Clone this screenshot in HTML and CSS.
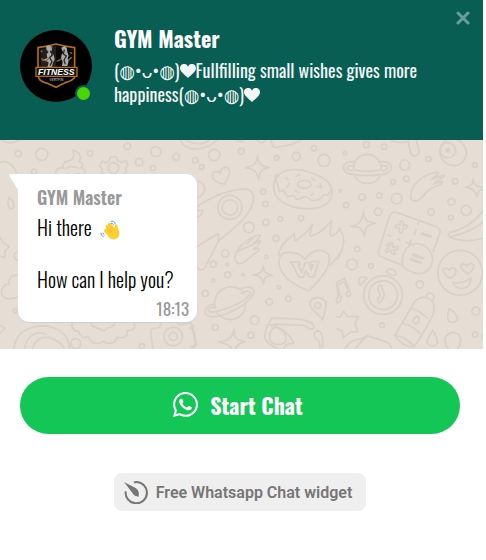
FILE: index.html
```html
<!DOCTYPE html>
<html lang="en">
<head>
<meta charset="utf-8">
<meta name="viewport" content="width=device-width, initial-scale=1">
<title>GYM Master</title>
<link rel="stylesheet" href="styles.css">
</head>
<body>
<main class="widget">
  <header class="header">
    <div class="avatar">
      <svg class="avatar-logo" viewBox="0 0 216 216" aria-hidden="true">
        <circle cx="108" cy="108" r="108" fill="#000"/>
        <path d="M54 112V53Q78 50 108 42Q138 50 164 53V112" fill="#090909" stroke="#b56d13" stroke-width="5"/>
        <path d="M108 48V112H62V57Q82 55 108 48Z" fill="#202020"/>
        <path d="M78 50l8-5 9 5 1 10-5 6 10 9 3 13-5 10-4 15H82l4-15-9-7-12 2 9-6 8-2-2-13 6-6-6-6ZM124 53l9-5 7 5 2 12 4 12-3 8 3 9-4 14h-16l2-13-5-10 2-12 5-5-4-8Z" fill="#aaa"/>
        <path d="M91 62l6 13-8 8 7 12-6 12M133 59l-3 13 9 6-7 12 4 13" fill="none" stroke="#292929" stroke-width="4"/>
        <path d="M64 86l14 7 10-8M145 91l10-9M110 94l15-7M62 66l5-4M151 67l5 4M92 45l5 8" fill="none" stroke="#a5651f" stroke-width="4"/>
        <path d="M55 141Q59 155 82 160L108 172L138 157Q159 152 164 141" fill="none" stroke="#b56d13" stroke-width="5"/>
        <path d="M48 112H171V139H48Z" fill="#111" stroke="#b56d13" stroke-width="4"/>
        <text class="logo-name" x="109" y="134" text-anchor="middle">FITNESS</text>
        <text class="logo-sub" x="109" y="153" text-anchor="middle">VERTFIN</text>
      </svg>
      <span class="status"></span>
    </div>
    <div class="intro">
      <h1 class="title">GYM Master</h1>
      <p class="tagline">(◍•ᴗ•◍)<svg class="heart" viewBox="0 0 48 42" aria-hidden="true"><path d="M24 42C17 34 0 25 0 12C0-3 20-4 24 8C28-4 48-3 48 12C48 25 31 34 24 42Z"/></svg>Fullfilling small wishes gives more happiness(◍•ᴗ•◍)<svg class="heart" viewBox="0 0 48 42" aria-hidden="true"><path d="M24 42C17 34 0 25 0 12C0-3 20-4 24 8C28-4 48-3 48 12C48 25 31 34 24 42Z"/></svg></p>
    </div>
    <button class="close" type="button" aria-label="Close">
      <svg viewBox="0 0 14 14" aria-hidden="true"><path d="M2 2L12 12M12 2L2 12"/></svg>
    </button>
  </header>

  <section class="chat">
    <svg class="doodles" viewBox="0 0 1449 627" preserveAspectRatio="xMinYMin slice" aria-hidden="true">
      <g transform="translate(0 -15)">
        <circle cx="125" cy="58" r="18"/><circle cx="55" cy="56" r="9"/><circle cx="102" cy="110" r="8"/><circle cx="270" cy="55" r="8"/><circle cx="382" cy="34" r="10"/><circle cx="417" cy="81" r="11"/><circle cx="467" cy="50" r="15"/><circle cx="458" cy="99" r="8"/><circle cx="528" cy="65" r="10"/>
        <path d="M0 12Q28 35 60 13M0 82C18 75 40 88 49 112M170 125C160 103 180 95 190 99C185 82 200 78 207 77C222 74 224 54 217 45C240 50 246 68 237 79C253 84 248 95 242 99C260 102 258 120 249 125"/>
        <path d="M197 100q18-10 39 0M202 117q18 8 35-3"/>
        <path d="M331 66h18l4 12 12 4 10-6 9 13-8 10 3 13-6 5M331 66l-4 13-11 5-10-6-7 14 8 10-3 12 8 4"/><circle cx="340" cy="99" r="16"/>
        <path d="M541 15C556 52 614 50 650 15M559 15C575 30 610 30 628 15"/>
        <path d="M27 188C22 202 23 221 34 221S45 199 27 188ZM0 307L9 322L27 334L15 348V368L0 363M54 352C40 350 38 370 54 377M54 421C31 416 24 437 27 447C7 445-1 474 10 485C17 493 32 493 54 486"/>
        <circle cx="46" cy="527" r="6"/>
        <path d="M0 571L15 579L0 594M41 642C49 570 127 565 164 579C195 591 207 615 208 642M73 642C80 600 111 585 139 598M97 642C105 610 134 599 158 611C179 620 190 629 192 642"/>
        <path d="M218 560C211 577 223 590 236 588C240 604 249 612 263 603C275 628 294 629 310 619C326 630 345 625 351 606C373 613 384 602 381 585C403 589 409 573 399 560M271 560C275 579 290 576 311 587C324 572 342 580 346 560"/>
        <circle cx="227" cy="625" r="15"/><circle cx="425" cy="633" r="8"/>
        <path d="M458 642L452 590Q451 580 462 580L478 577L484 560H528L538 569L566 564Q576 562 578 575L588 625Q588 636 575 638M568 579h7"/><circle cx="519" cy="604" r="28"/><circle cx="519" cy="604" r="12"/>
      </g>
      <g transform="translate(570 -15)">
        <circle cx="15" cy="76" r="8"/><circle cx="34" cy="96" r="7"/><circle cx="72" cy="60" r="17"/><circle cx="153" cy="49" r="9"/><circle cx="259" cy="69" r="7"/><circle cx="318" cy="64" r="12"/><circle cx="371" cy="40" r="8"/><circle cx="401" cy="76" r="18"/>
        <path d="M140 17Q153 24 160 15M201 17Q213 31 226 15M242 15Q247 45 266 36L305 28L333 15"/>
        <path d="M202 61C204 82 207 94 238 97C213 101 209 108 205 133C198 107 195 104 166 98C195 93 199 84 202 61ZM103 147C78 143 63 133 67 117C73 105 83 109 91 115C91 94 112 91 118 107C121 119 111 132 103 147Z"/>
        <path d="M250 155C258 91 327 98 370 116C410 131 430 151 424 180C418 218 365 228 315 217C276 207 248 185 250 155ZM257 133Q264 150 267 170L280 165L291 185L309 181L320 194L345 184L367 198L391 191L399 179L413 181L425 158M258 118Q250 128 257 139"/><ellipse cx="342" cy="148" rx="20" ry="12"/>
        <path d="M287 128l6 6M318 123l10-3M364 130l10 7M380 154l15 5M389 145l5 13M370 175l-8 6M326 172l-12-6M297 145l-9 13"/>
        <circle cx="219" cy="170" r="8"/><circle cx="225" cy="207" r="8"/><circle cx="227" cy="262" r="9"/><circle cx="270" cy="252" r="7"/><circle cx="332" cy="249" r="8"/><circle cx="176" cy="277" r="16"/><circle cx="257" cy="310" r="9"/><circle cx="105" cy="355" r="11"/><circle cx="69" cy="387" r="9"/><circle cx="111" cy="388" r="4"/><circle cx="112" cy="419" r="9"/><circle cx="69" cy="436" r="5"/><circle cx="159" cy="419" r="4"/><circle cx="228" cy="366" r="5"/><circle cx="266" cy="456" r="5"/>
        <path d="M21 215C65 184 120 162 163 162C193 164 194 187 185 214C165 257 124 283 83 320C70 349 55 376 43 400Q31 412 21 396M21 334Q49 316 85 295V317M21 226H38L33 239L21 247M21 138C49 143 54 174 21 189"/><circle cx="119" cy="217" r="36"/><circle cx="119" cy="217" r="23"/>
        <path d="M141 348C155 322 178 308 207 299C217 300 200 315 186 329M171 326L187 309M185 330L208 317C216 318 199 334 189 344L204 339C215 345 189 357 175 370C158 386 142 391 136 377Q131 364 141 348Z"/>
        <path d="M265 361C267 330 290 318 312 295C314 311 310 321 320 314C337 301 351 293 366 269C362 289 352 307 366 302C389 294 409 276 422 257C425 280 412 299 424 303Q436 300 450 281M420 389Q437 373 450 353"/>
        <path d="M355 467C327 455 285 438 270 400C260 371 269 352 294 352C320 353 331 357 344 373C363 344 397 336 415 360C427 396 384 440 355 467Z"/>
        <path d="M299 380H327L330 388L323 390L334 412L345 382L359 382L362 406L369 390L361 388L364 379H386L371 424L357 425L346 407L339 426H326L308 390Z"/>
        <path d="M219 392C220 410 222 415 247 421C222 424 222 427 219 447C213 426 211 422 189 420C213 415 214 411 219 392Z"/>
        <circle cx="45" cy="475" r="9"/><circle cx="237" cy="500" r="10"/><circle cx="294" cy="491" r="8"/><circle cx="193" cy="555" r="13"/><circle cx="75" cy="577" r="9"/><circle cx="182" cy="600" r="9"/>
        <path d="M75 519C65 480 96 453 126 455C144 457 156 465 162 475M165 504C169 534 142 555 116 553Q88 548 79 530M151 461C176 450 198 459 189 477C177 498 151 518 116 533C78 549 43 550 44 529C46 512 61 509 72 507M154 474C173 463 184 468 178 479C161 500 127 515 96 524C70 532 52 533 55 522Q61 515 73 515"/>
        <path d="M132 582C131 609 136 613 166 620C147 622 139 630 135 642M125 642C121 630 112 627 86 620C117 619 129 602 132 582M0 548Q7 590 16 620Q17 633 0 635"/>
        <path d="M224 607C224 582 232 570 245 549L318 551C356 555 374 565 370 580C363 587 352 576 342 571L258 567L245 570L234 567M246 571C270 575 303 600 309 624C294 625 280 630 281 641M224 607C229 624 245 633 262 639M238 597C242 580 255 572 266 580C281 585 289 603 287 617C277 633 248 630 240 616ZM389 642Q390 613 375 609C362 593 385 579 391 592Q400 607 396 642"/>
        <path d="M397 555C385 534 355 521 359 505C363 482 396 482 407 502C407 520 401 539 397 555Z"/><circle cx="382" cy="511" r="9"/>
      </g>
      <g transform="translate(1008 -15)">
        <circle cx="26" cy="54" r="5"/><circle cx="90" cy="29" r="9"/><circle cx="143" cy="35" r="8"/><circle cx="205" cy="90" r="15"/><circle cx="276" cy="72" r="8"/><circle cx="210" cy="131" r="8"/><circle cx="170" cy="141" r="7"/><circle cx="77" cy="186" r="10"/><circle cx="129" cy="181" r="8"/><circle cx="29" cy="210" r="8"/><circle cx="181" cy="191" r="16"/><circle cx="125" cy="230" r="11"/><circle cx="12" cy="167" r="4"/><circle cx="284" cy="231" r="10"/><circle cx="345" cy="200" r="10"/><circle cx="343" cy="247" r="7"/><circle cx="389" cy="226" r="15"/><circle cx="415" cy="90" r="7"/><circle cx="356" cy="139" r="8"/><circle cx="62" cy="342" r="8"/><circle cx="47" cy="388" r="16"/><circle cx="104" cy="392" r="7"/><circle cx="250" cy="448" r="11"/><circle cx="137" cy="570" r="7"/><circle cx="418" cy="528" r="12"/><circle cx="416" cy="598" r="8"/>
        <path d="M52 94C57 46 126 46 134 94V104C112 111 75 111 52 104ZM52 80C12 77 12 113 46 118Q92 125 141 118C176 110 171 79 134 80M50 92C27 91 28 105 48 108M136 92C159 91 158 104 139 108M54 120C65 153 120 154 132 120"/>
        <path d="M163 15Q180 27 216 20L222 54Q230 68 244 59Q251 55 246 40L240 15"/>
        <path d="M310 52C312 89 364 110 386 70C397 47 381 19 361 15M310 52Q309 30 329 15"/><circle cx="334" cy="46" r="23"/><circle cx="334" cy="46" r="5" class="dot"/>
        <path d="M223 179C225 144 264 117 304 111C315 114 291 126 284 134L321 119C333 121 304 133 291 147L316 139C325 144 298 155 283 160C266 171 258 193 241 197C226 200 220 191 223 179Z"/>
        <path d="M410 132C411 149 417 154 441 157M441 163C425 164 425 169 421 185C414 166 410 161 388 157C406 153 410 147 410 132M81 229C84 254 88 260 118 264C91 269 88 276 84 303C76 280 74 274 44 274C72 266 77 259 81 229Z"/>
        <path d="M197 390L134 365Q123 360 127 346L158 247Q163 229 180 232L298 274Q315 281 309 296L290 350M197 390C196 349 213 325 244 326C276 329 293 360 287 383C278 417 246 423 218 407Q201 398 197 390ZM250 255l-6 12M239 283l-5 15M190 315l-6-3M163 303l-8-3M224 315l-7 17M209 323l23 6"/>
        <path d="M193 257Q204 256 200 271L210 269Q219 278 201 281L196 293Q184 296 190 280L177 278Q175 265 190 271ZM162 324Q173 321 169 337L184 333Q191 343 171 345L176 357Q163 360 163 345L149 353Q144 344 157 339L150 329Q159 323 162 333Z"/>
        <path class="thick" d="M257 296l25 8M230 358l28 11M225 373l28 10"/>
        <path d="M441 225C415 263 372 286 342 291Q331 300 342 307Q385 325 441 309M441 260Q404 292 343 305M7 280Q22 292 22 320Q20 348 3 372"/>
        <circle cx="371" cy="413" r="67"/><path d="M340 430C323 419 313 403 325 399Q333 398 338 405Q351 391 359 405Q359 421 340 430ZM395 416C377 406 365 393 378 387Q387 386 391 393Q405 377 412 392Q412 407 395 416ZM349 442Q379 447 403 429Q403 458 376 460Q357 459 349 442Z"/>
        <circle cx="140" cy="480" r="58"/><circle cx="140" cy="480" r="43"/><path d="M127 451Q137 447 137 461L144 477Q143 489 132 501Q122 506 124 493L132 480L124 462ZM72 451C60 433 73 418 92 429ZM149 409C158 396 177 399 179 419L165 422Z"/>
        <path d="M0 443L25 429L43 476Q43 487 31 482Q28 470 37 468L23 439L3 451L14 488Q15 503 2 503Q-4 494 6 486ZM0 545L12 545L22 528L34 545L66 543L55 566L65 589L43 591L20 608L18 589L0 580"/>
        <path d="M24 642Q45 612 69 612L93 602L147 619Q161 624 166 642M57 642L74 619L93 602"/>
        <path d="M175 602L234 500Q252 480 276 490Q295 497 293 525Q289 552 233 635Q202 638 175 602ZM223 520Q242 520 275 550M198 565Q226 569 250 594M176 602Q204 602 232 632M270 486Q270 474 281 473Q293 476 293 485L288 499M245 541Q254 563 239 566Q224 563 233 549Z"/>
        <path d="M338 520Q367 539 362 554Q351 568 337 558Q330 550 338 520ZM289 585Q307 615 301 626Q286 639 273 625Q269 614 289 585ZM336 642Q321 622 328 604Q347 581 369 600Q379 621 362 642M441 595L437 603L441 612"/>
      </g>
    </svg>
    <article class="bubble">
      <svg class="tail" viewBox="0 0 9 16" aria-hidden="true"><path d="M9 0H2Q-1 0 1 3L9 16Z"/></svg>
      <h2 class="sender">GYM Master</h2>
      <p class="message">Hi there <svg class="wave" viewBox="0 0 60 60" role="img" aria-label="waving hand"><path d="M13 30Q14 25 20 28L17 18Q18 12 24 16L25 10Q29 5 34 11L43 24L44 17Q45 10 51 14Q54 17 54 26Q63 42 53 53Q42 63 29 54L14 37Q11 33 13 30Z" fill="#ffcf32"/><path d="M20 28L33 40M18 20L36 36M25 12L40 30" stroke="#f2ae28" stroke-width="2"/><path d="M32 4Q42 0 46 12M33 10Q39 8 41 15M3 38Q1 47 11 50M9 38Q8 43 14 45" fill="none" stroke="#67a0f3" stroke-width="3"/></svg><br><br>How can I help you?</p>
      <time class="time" datetime="18:13">18:13</time>
    </article>
  </section>

  <footer class="footer">
    <button class="start" type="button">
      <svg class="whatsapp" viewBox="0 32 448 448" aria-hidden="true"><path d="M380.900 97.100C339 55.100 283.200 32 223.900 32c-122.400 0-222 99.600-222 222 0 39.100 10.200 77.300 29.600 111L0 480l117.700-30.900c32.400 17.700 68.900 27 106.100 27h.1c122.300 0 224.100-99.600 224.100-222 0-59.300-25.200-115-67.100-157zm-157 341.600c-33.200 0-65.700-8.900-94-25.700l-6.700-4-69.800 18.300L72 359.200l-4.400-7c-18.500-29.400-28.200-63.300-28.200-98.200 0-101.700 82.800-184.500 184.600-184.500 49.300 0 95.600 19.200 130.400 54.100 34.800 34.900 56.200 81.200 56.100 130.500 0 101.800-84.900 184.600-186.600 184.600zm101.200-138.200c-5.500-2.800-32.800-16.200-37.900-18-5.100-1.900-8.800-2.800-12.500 2.800-3.700 5.600-14.300 18-17.600 21.800-3.200 3.700-6.500 4.200-12 1.400-32.600-16.300-54-29.100-75.500-66-5.700-9.800 5.700-9.100 16.300-30.300 1.800-3.700.9-6.900-.5-9.700-1.400-2.800-12.500-30.100-17.100-41.200-4.500-10.800-9.100-9.300-12.500-9.500-3.200-.2-6.900-.2-10.600-.2-3.700 0-9.700 1.400-14.800 6.900-5.100 5.600-19.400 19-19.400 46.300 0 27.300 19.900 53.700 22.600 57.400 2.800 3.700 39.100 59.700 94.800 83.800 35.200 15.200 49 16.500 66.600 13.900 10.700-1.600 32.800-13.400 37.400-26.400 4.600-13 4.600-24.100 3.200-26.400-1.300-2.500-5-3.900-10.500-6.600z"/></svg>
      Start Chat
    </button>
    <a class="credit" href="#">
      <svg class="dial" viewBox="0 0 72 69" aria-hidden="true"><path d="M5 31A32 32 0 1 0 37 3Q33 3 30 5" fill="none" stroke="#767676" stroke-width="6"/><path d="M0 3L36 22Q47 29 44 47Q31 47 26 37Z" fill="#767676"/></svg>
      Free Whatsapp Chat widget
    </a>
  </footer>
</main>
</body>
</html>
```
FILE: styles.css
```css
* {
  box-sizing: border-box;
}

body {
  margin: 0;
  background: #fff;
  font-family: Oswald, "Liberation Sans Narrow", "DejaVu Sans", sans-serif;
}

h1,
h2,
p {
  margin: 0;
}

button {
  border: 0;
  font-family: inherit;
  cursor: pointer;
}

.widget {
  margin-right: 3px;
}

.header {
  position: relative;
  display: flex;
  align-items: center;
  gap: 22px;
  padding: 25px 54px 34px 20px;
  background: #095e54;
  color: #fff;
}

.avatar {
  position: relative;
  flex: none;
  width: 72px;
  height: 72px;
}

.avatar-logo {
  display: block;
  width: 100%;
  height: 100%;
}

.logo-name {
  fill: #fff;
  font: italic 700 26px "Liberation Sans", sans-serif;
}

.logo-sub {
  fill: #999;
  font: 700 10px "Liberation Sans", sans-serif;
}

.status {
  position: absolute;
  right: 0;
  bottom: 0;
  width: 17px;
  height: 17px;
  border: 2px solid #095e54;
  border-radius: 50%;
  background: #4ad504;
}

.title {
  margin-bottom: 7px;
  font-size: 22px;
  line-height: 26px;
  font-weight: 700;
}

.tagline {
  font-size: 18px;
  line-height: 24px;
  opacity: 0.95;
}

.heart {
  width: 16px;
  height: 14px;
  fill: #fff;
}

.close {
  position: absolute;
  top: 10px;
  right: 12px;
  width: 16px;
  height: 16px;
  padding: 1px;
  background: none;
}

.close svg {
  display: block;
  fill: none;
  stroke: #6b9e98;
  stroke-width: 3;
  stroke-linecap: round;
}

.chat {
  position: relative;
  padding: 34px 18px 27px;
  background: #e6ddd4;
  overflow: hidden;
}

.doodles {
  position: absolute;
  inset: 0;
  width: 100%;
  height: 100%;
  fill: none;
  stroke: #d9d0c7;
  stroke-width: 5;
  stroke-linejoin: round;
  stroke-linecap: round;
}

.doodles .dot {
  fill: #d9d0c7;
}

.doodles .thick {
  stroke-width: 9;
}

.bubble {
  position: relative;
  width: fit-content;
  min-width: 179px;
  padding: 10px 8px 2px 19px;
  border-radius: 0 11px 11px 11px;
  background: #fff;
  box-shadow: 0 1px 1px #d5cdc4;
}

.tail {
  position: absolute;
  top: 0;
  left: -9px;
  width: 9px;
  height: 16px;
  fill: #fff;
}

.sender {
  margin-bottom: 4px;
  color: #999;
  font-size: 18px;
  line-height: 26px;
  font-weight: 600;
}

.message {
  margin-right: 11px;
  color: #000;
  font-size: 20px;
  line-height: 26px;
  font-weight: 300;
}

.wave {
  width: 20px;
  height: 20px;
  margin-left: 4px;
  vertical-align: middle;
}

.time {
  display: block;
  margin-top: 6px;
  color: #999;
  font-size: 17px;
  line-height: 22px;
  text-align: right;
}

.footer {
  display: flex;
  flex-direction: column;
  align-items: center;
  gap: 39px;
  padding: 28px 23px 28px 20px;
}

.start {
  display: flex;
  align-items: center;
  justify-content: center;
  gap: 12px;
  width: 100%;
  height: 57px;
  padding: 0 4px 2px 0;
  border-radius: 29px;
  background: #14c656;
  color: #fff;
  font-size: 22px;
  font-weight: 700;
}

.whatsapp {
  width: 25px;
  height: 25px;
  fill: #fff;
}

.credit {
  display: flex;
  align-items: center;
  gap: 8px;
  height: 38px;
  padding: 0 14px 0 10px;
  border-radius: 8px;
  background: #efefef;
  color: #767676;
  font: 600 16px Roboto, sans-serif;
  text-decoration: none;
}

.dial {
  width: 24px;
  height: 23px;
}
```
